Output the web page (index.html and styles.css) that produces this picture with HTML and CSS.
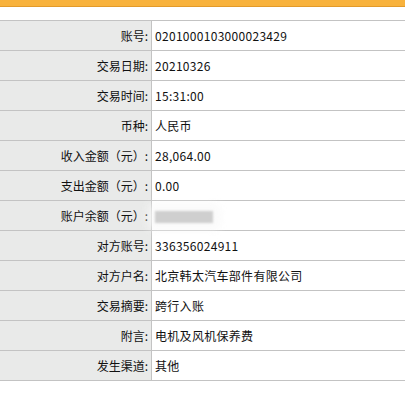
FILE: index.html
```html
<!DOCTYPE html>
<html lang="zh">
<head>
<meta charset="utf-8">
<link rel="stylesheet" href="styles.css">
</head>
<body>
<div class="topbar"></div>
<div class="spacer"></div>
<table class="detail">
<tr><td class="lbl">账号:</td><td class="val">0201000103000023429</td></tr>
<tr><td class="lbl">交易日期:</td><td class="val">20210326</td></tr>
<tr><td class="lbl">交易时间:</td><td class="val">15:31:00</td></tr>
<tr><td class="lbl">币种:</td><td class="val">人民币</td></tr>
<tr><td class="lbl">收入金额（元）:</td><td class="val">28,064.00</td></tr>
<tr><td class="lbl">支出金额（元）:</td><td class="val">0.00</td></tr>
<tr><td class="lbl">账户余额（元）:</td><td class="val"><span class="blurred"></span></td></tr>
<tr><td class="lbl">对方账号:</td><td class="val">336356024911</td></tr>
<tr><td class="lbl">对方户名:</td><td class="val">北京韩太汽车部件有限公司</td></tr>
<tr><td class="lbl">交易摘要:</td><td class="val">跨行入账</td></tr>
<tr><td class="lbl">附言:</td><td class="val">电机及风机保养费</td></tr>
<tr><td class="lbl">发生渠道:</td><td class="val">其他</td></tr>
</table>
</body>
</html>
```
FILE: styles.css
```css
html, body {
  margin: 0;
  padding: 0;
  background: #fff;
}
body {
  font-family: "Noto Sans CJK SC", "Noto Sans", sans-serif;
  font-size: 12px;
  color: #111;
}
.topbar {
  height: 6px;
  background: #f8b23c;
  border-bottom: 1px solid #e29a2a;
}
.spacer {
  height: 13px;
}
.detail {
  width: 100%;
  border-collapse: collapse;
  border-top: 1px solid #c3c3c3;
}
.detail td {
  height: 29px;
  padding: 0;
  border-bottom: 1px solid #c3c3c3;
  vertical-align: middle;
  line-height: 16px;
}
.lbl {
  width: 148px;
  padding-right: 3px !important;
  text-align: right;
  background: #e9eae9;
  border-right: 1px solid #c3c3c3;
}
.val {
  padding-left: 3px !important;
  letter-spacing: 0.3px;
}
.blurred {
  display: inline-block;
  width: 58px;
  height: 12px;
  vertical-align: middle;
  background: #cfcfcf;
  filter: blur(1px);
  box-shadow: 0 0 10px 6px rgba(248,248,248,0.9);
}
```
